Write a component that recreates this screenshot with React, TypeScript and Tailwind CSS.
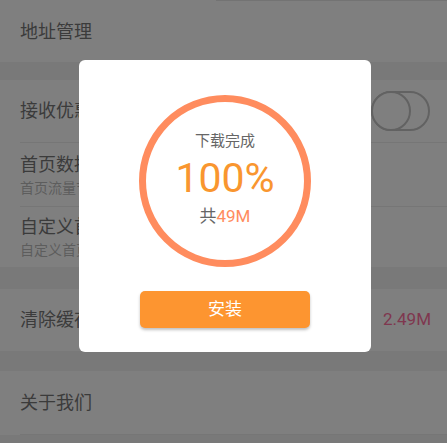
const font = { fontFamily: 'Roboto, "Noto Sans CJK SC", sans-serif' };

const Row = ({ title, sub, right, height }: { title: string; sub?: string; right?: React.ReactNode; height: string }) => (
  <div className={`flex items-center justify-between bg-white pl-5 pr-4 ${height}`}>
    <div className="flex flex-col">
      <span className="text-[18px] leading-[24px] text-[#777]">{title}</span>
      {sub && <span className="text-[14px] leading-[18px] mt-[2px] text-[#bbb]">{sub}</span>}
    </div>
    {right}
  </div>
);

const Divider = () => (
  <div className="bg-white pl-5">
    <div className="h-px bg-[#ececec]" />
  </div>
);

const Toggle = () => (
  <div className="relative w-[59px] h-[40px] rounded-full border-2 border-[#c4c4c4] bg-white mr-[1px]">
    <div className="absolute -left-[2px] -top-[2px] w-[40px] h-[40px] rounded-full border-2 border-[#c4c4c4] bg-white" />
  </div>
);

export default function App() {
  return (
    <div className="relative w-[447px] h-[443px] overflow-hidden bg-[#f2f2f2]" style={font}>
      <div className="bg-white">
        <div className="ml-[216px] h-px bg-[#e6e6e6]" />
      </div>
      <Row title="地址管理" height="h-[61px]" />
      <div className="h-[18px]" />
      <Row title="接收优惠通知" height="h-[62px]" right={<Toggle />} />
      <Divider />
      <Row title="首页数据节省" sub="首页流量节省模式" height="h-[63px]" />
      <Divider />
      <Row title="自定义首页" sub="自定义首页栏目" height="h-[60px]" />
      <div className="h-[22px]" />
      <Row title="清除缓存" height="h-[62px]" right={<span className="text-[17px] text-[#ff6f9e]">2.49M</span>} />
      <div className="h-[20px]" />
      <Row title="关于我们" height="h-[63px]" />
      <div className="bg-white pl-5">
        <div className="h-px bg-[#ececec]" />
      </div>

      <div className="absolute inset-0 bg-black/50 flex items-start pl-[79px] pt-[60px]">
        <div className="w-[292px] h-[292px] bg-white rounded-[6px] flex flex-col items-center pt-[35px]">
          <div className="w-[172px] h-[172px] rounded-full border-[7px] border-[#ff8c5e] flex flex-col items-center">
            <span className="mt-[30px] text-[15px] leading-[19px] text-[#666]">下载完成</span>
            <span className="mt-[5px] text-[41px] leading-[44px] text-[#f9962f]">100%</span>
            <span className="mt-[6px] text-[17px] leading-[20px] text-[#666]">
              共<span className="text-[#ff8c5e]">49M</span>
            </span>
          </div>
          <button className="mt-[24px] w-[170px] h-[37px] rounded-[5px] bg-[#fd9530] text-white text-[17px] shadow-[0_2px_3px_rgba(0,0,0,0.25)]">
            安装
          </button>
        </div>
      </div>
    </div>
  );
}
